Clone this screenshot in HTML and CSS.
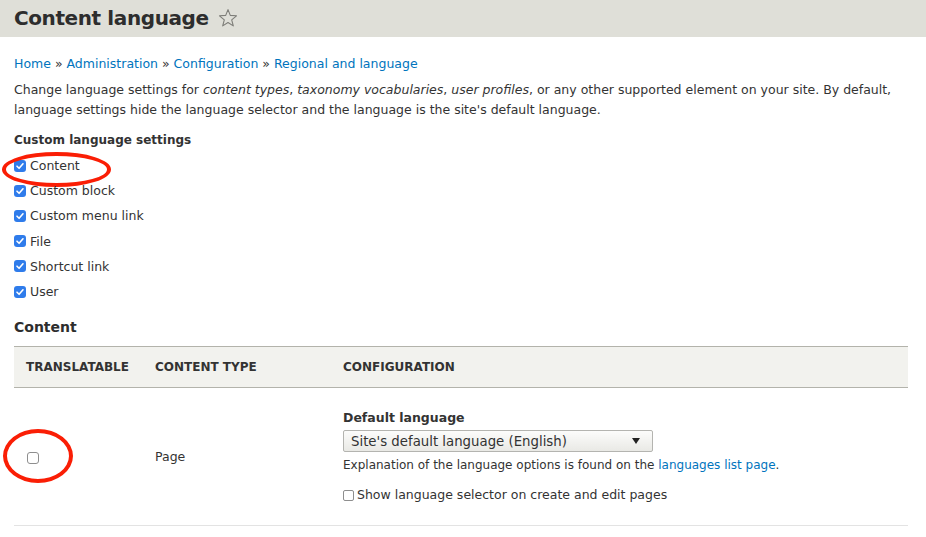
FILE: index.html
```html
<!DOCTYPE html>
<html>
<head>
<meta charset="utf-8">
<link rel="stylesheet" href="styles.css">
</head>
<body>
<header class="page-head">
  <h1 class="title">Content language</h1>
  <svg class="star" width="20" height="20" viewBox="0 0 20 20"><path d="M10 1.6 L12.3 7.4 L18.5 7.8 L13.7 11.8 L15.3 17.9 L10 14.5 L4.7 17.9 L6.3 11.8 L1.5 7.8 L7.7 7.4 Z" fill="none" stroke="#7d7d78" stroke-width="1.1" stroke-linejoin="round"/></svg>
</header>
<main class="content">
  <nav class="crumbs"><a>Home</a> » <a>Administration</a> » <a>Configuration</a> » <a>Regional and language</a></nav>
  <p class="desc">Change language settings for <em>content types</em>, <em>taxonomy vocabularies</em>, <em>user profiles</em>, or any other supported element on your site. By default, language settings hide the language selector and the language is the site's default language.</p>
  <div class="group-label">Custom language settings</div>
  <ul class="checks">
    <li class="marked"><span class="cb on"></span>Content</li>
    <li><span class="cb on"></span>Custom block</li>
    <li><span class="cb on"></span>Custom menu link</li>
    <li><span class="cb on"></span>File</li>
    <li><span class="cb on"></span>Shortcut link</li>
    <li><span class="cb on"></span>User</li>
  </ul>
  <h2 class="section">Content</h2>
  <table class="tbl">
    <thead>
      <tr><th class="c1">Translatable</th><th class="c2">Content type</th><th>Configuration</th></tr>
    </thead>
    <tbody>
      <tr>
        <td class="c1"><span class="mark2"><span class="cb off"></span></span></td>
        <td class="c2">Page</td>
        <td class="cfg">
          <div class="cfg-label">Default language</div>
          <div class="select"><span>Site's default language (English)</span><span class="arrow"></span></div>
          <div class="help">Explanation of the language options is found on the <a>languages list page</a>.</div>
          <div class="opt"><span class="cb off small"></span>Show language selector on create and edit pages</div>
        </td>
      </tr>
    </tbody>
  </table>
</main>
</body>
</html>
```
FILE: styles.css
```css
* { box-sizing: border-box; }
body {
  margin: 0;
  font-family: "DejaVu Sans", Verdana, sans-serif;
  font-size: 12.5px;
  color: #333;
  background: #fff;
}
a { color: #0074bd; text-decoration: none; }
em { font-style: italic; }
.page-head {
  background: #dfdfd8;
  height: 37px;
  padding-left: 14px;
  display: flex;
  align-items: center;
  gap: 9px;
}
.title {
  margin: 0;
  font-size: 20px;
  font-weight: bold;
  color: #2d2d2d;
  line-height: 37px;
  letter-spacing: -0.4px;
}
.star { display: block; margin-top: -1px; }
.content { padding: 0 18px 0 14px; }
.crumbs {
  margin-top: 18px;
  line-height: 18px;
  font-size: 12.5px;
  color: #333;
}
.desc {
  margin: 7px 0 0;
  line-height: 20px;
  font-size: 12.5px;
}
.group-label {
  margin-top: 10px;
  font-weight: bold;
  font-size: 12px;
  line-height: 20px;
}
.checks {
  list-style: none;
  margin: 3px 0 0;
  padding: 0;
}
.checks li {
  height: 25.2px;
  display: flex;
  align-items: center;
  gap: 4px;
  position: relative;
}
.cb {
  width: 12px;
  height: 12px;
  border-radius: 3px;
  display: inline-block;
  flex: none;
}
.cb.on {
  background: #2f7ceb url("data:image/svg+xml,%3Csvg xmlns='http://www.w3.org/2000/svg' viewBox='0 0 12 12'%3E%3Cpath d='M3 6.2 L5.1 8.3 L9 3.8' fill='none' stroke='white' stroke-width='1.6' stroke-linecap='round' stroke-linejoin='round'/%3E%3C/svg%3E") center/12px 12px no-repeat;
}
.cb.off {
  border: 1px solid #8e8e8e;
  background: #fff;
}
.marked::before {
  content: "";
  position: absolute;
  left: -12px;
  top: calc(50% - 13.5px);
  width: 101px;
  height: 27px;
  border: 4px solid #fa1e05;
  border-radius: 50%;
}
.section {
  margin: 13px 0 0;
  font-size: 14px;
  font-weight: bold;
  line-height: 20px;
  color: #2d2d2d;
}
.tbl {
  margin-top: 9px;
  width: 100%;
  border-collapse: collapse;
}
.tbl thead tr {
  background: #f2f2ee;
  border-top: 1px solid #b3b3ab;
  border-bottom: 1px solid #b3b3ab;
}
.tbl th {
  height: 41px;
  text-align: left;
  text-transform: uppercase;
  font-size: 12px;
  font-weight: bold;
  padding: 0 12px;
  color: #333;
}
.tbl th.c1, .tbl td.c1 { width: 129px; }
.tbl td.c1 { padding-left: 13px; }
.tbl th.c2, .tbl td.c2 { width: 188px; }
.tbl tbody tr { border-bottom: 1px solid #e3e3e3; }
.tbl td {
  padding: 0 12px;
  vertical-align: middle;
  height: 138px;
}
.mark2 {
  position: relative;
  display: inline-block;
  width: 12px;
  height: 12px;
  vertical-align: middle;
}
.mark2 .cb { display: block; width: 12px; height: 12px; }
.mark2::before {
  content: "";
  position: absolute;
  left: -24px;
  top: -23px;
  width: 62px;
  height: 46px;
  border: 4px solid #fa1e05;
  border-radius: 50%;
}
.tbl td.cfg { padding-top: 0; }
.cfg-label {
  font-weight: bold;
  font-size: 12.5px;
  line-height: 18px;
}
.select {
  margin-top: 3px;
  width: 310px;
  height: 22px;
  border: 1px solid #b4b4b0;
  border-radius: 2px;
  background: linear-gradient(#fcfcfb, #e9e9e5);
  display: flex;
  align-items: center;
  justify-content: space-between;
  padding: 0 12px 0 7px;
  font-size: 13.3px;
  color: #333;
}
.arrow {
  width: 0;
  height: 0;
  border-left: 4.5px solid transparent;
  border-right: 4.5px solid transparent;
  border-top: 6px solid #222;
}
.help {
  margin-top: 4px;
  font-size: 12px;
  line-height: 18px;
  color: #333;
}
.opt {
  margin-top: 12px;
  display: flex;
  align-items: center;
  gap: 3px;
  font-size: 12.5px;
  line-height: 18px;
}
.cb.small { width: 11px; height: 11px; border-radius: 2px; }
```
